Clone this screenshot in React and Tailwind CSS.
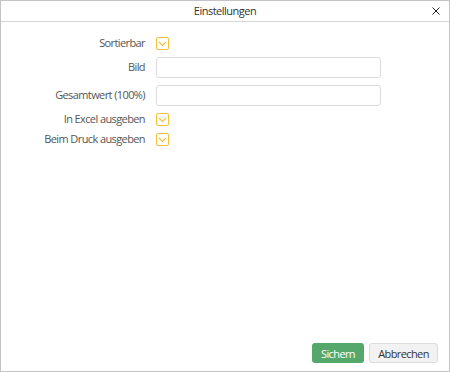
import React from 'react';

function CheckBox() {
  return (
    <span className="flex items-center justify-center w-[13px] h-[13px] border border-[#f4c038] rounded-[2px] bg-white">
      <svg width="9" height="7" viewBox="0 0 9 7" fill="none">
        <path d="M1 2 L4.5 5.5 L8 2" stroke="#f4c038" strokeWidth="1.1" />
      </svg>
    </span>
  );
}

function Row({ label, children, h }) {
  return (
    <div className={`flex items-center ${h}`}>
      <span className="w-[145px] pr-[1px] text-right text-[11px] tracking-[-0.6px] text-[#555] whitespace-nowrap">{label}</span>
      <div className="ml-[10px] flex items-center">{children}</div>
    </div>
  );
}

export default function App() {
  return (
    <div
      className="w-[450px] h-[372px] bg-white border border-[#c4c4c4] flex flex-col"
      style={{ fontFamily: '"Open Sans", sans-serif' }}
    >
      <div className="h-[21px] border-b border-[#d6d6d6] flex items-center justify-center relative shrink-0">
        <span className="text-[11px] tracking-[-0.5px] text-[#333]">Einstellungen</span>
        <svg className="absolute right-[9px] top-[6px]" width="8" height="8" viewBox="0 0 8 8">
          <path d="M0.5 0.5 L7.5 7.5 M7.5 0.5 L0.5 7.5" stroke="#222" strokeWidth="1" />
        </svg>
      </div>

      <div className="flex flex-col pt-[11px]">
        <Row label="Sortierbar" h="h-[20px]"><CheckBox /></Row>
        <Row label="Bild" h="h-[28px]">
          <div className="w-[225px] h-[21px] border border-[#dcdcdc] rounded-[3px]" />
        </Row>
        <Row label="Gesamtwert (100%)" h="h-[28px]">
          <div className="w-[225px] h-[21px] border border-[#dcdcdc] rounded-[3px]" />
        </Row>
        <Row label="In Excel ausgeben" h="h-[20px]"><CheckBox /></Row>
        <Row label="Beim Druck ausgeben" h="h-[20px]"><CheckBox /></Row>
      </div>

      <div className="flex-1" />

      <div className="flex justify-end gap-[5px] pr-[11px] pb-[8px]">
        <button className="h-[20px] w-[52px] rounded-[3px] bg-[#55a86c] text-white text-[11px] leading-none tracking-[-0.6px]">
          Sichern
        </button>
        <button className="h-[20px] w-[69px] rounded-[3px] bg-[#f2f2f2] border border-[#dcdcdc] text-[#333] text-[11px] leading-none tracking-[-0.6px]">
          Abbrechen
        </button>
      </div>
    </div>
  );
}
